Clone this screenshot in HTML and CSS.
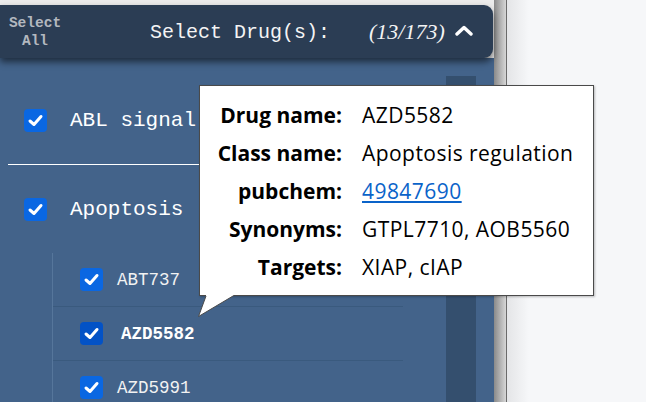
FILE: index.html
```html
<!DOCTYPE html>
<html>
<head>
<meta charset="utf-8">
<link rel="stylesheet" href="styles.css">
</head>
<body>
<div class="page">
  <div class="panel">
    <div class="header">
      <div class="select-all">Select<br>All</div>
      <div class="title">Select Drug(s):</div>
      <div class="count">(13/173)</div>
      <svg class="caret" width="18" height="11" viewBox="0 0 18 11"><path d="M2 9 L9 2.5 L16 9" fill="none" stroke="#fff" stroke-width="3.4" stroke-linecap="round" stroke-linejoin="round"/></svg>
    </div>
    <div class="body">
      <div class="list">
        <div class="group-row">
          <span class="cb"><svg viewBox="0 0 23 23"><path d="M6 12 L10 15.5 L17 7.5" fill="none" stroke="#fff" stroke-width="3" stroke-linecap="round" stroke-linejoin="round"/></svg></span>
          <span class="group-label">ABL signal</span>
        </div>
        <div class="divider"></div>
        <div class="group-row">
          <span class="cb"><svg viewBox="0 0 23 23"><path d="M6 12 L10 15.5 L17 7.5" fill="none" stroke="#fff" stroke-width="3" stroke-linecap="round" stroke-linejoin="round"/></svg></span>
          <span class="group-label">Apoptosis</span>
        </div>
        <div class="sublist">
          <div class="item">
            <span class="cb"><svg viewBox="0 0 23 23"><path d="M6 12 L10 15.5 L17 7.5" fill="none" stroke="#fff" stroke-width="3" stroke-linecap="round" stroke-linejoin="round"/></svg></span>
            <span class="item-label">ABT737</span>
          </div>
          <div class="item hover">
            <span class="cb"><svg viewBox="0 0 23 23"><path d="M6 12 L10 15.5 L17 7.5" fill="none" stroke="#fff" stroke-width="3" stroke-linecap="round" stroke-linejoin="round"/></svg></span>
            <span class="item-label">AZD5582</span>
          </div>
          <div class="item">
            <span class="cb"><svg viewBox="0 0 23 23"><path d="M6 12 L10 15.5 L17 7.5" fill="none" stroke="#fff" stroke-width="3" stroke-linecap="round" stroke-linejoin="round"/></svg></span>
            <span class="item-label">AZD5991</span>
          </div>
        </div>
      </div>
      <div class="scrollbar"></div>
    </div>
  </div>
  <div class="gutter"></div>
  <div class="rest"></div>

  <div class="tooltip">
    <div class="tt-grid">
      <div class="tt-label">Drug name:</div><div class="tt-value">AZD5582</div>
      <div class="tt-label">Class name:</div><div class="tt-value">Apoptosis regulation</div>
      <div class="tt-label">pubchem:</div><div class="tt-value"><a class="tt-link" href="#">49847690</a></div>
      <div class="tt-label">Synonyms:</div><div class="tt-value">GTPL7710, AOB5560</div>
      <div class="tt-label">Targets:</div><div class="tt-value">XIAP, cIAP</div>
    </div>
    <svg class="tt-arrow" width="40" height="26" viewBox="0 0 40 26">
      <polygon points="9,0 37,0 36,3 1.5,23.5 9,3" fill="#fff"/>
      <polyline points="9,3 1.5,23.5 36,3" fill="none" stroke="#4a4a4a" stroke-width="1"/>
    </svg>
  </div>
</div>
</body>
</html>
```

FILE: styles.css
```css
* { box-sizing: border-box; }
html, body { margin: 0; padding: 0; }
body {
  width: 646px;
  height: 402px;
  overflow: hidden;
  background: #f6f7f9;
}
.page {
  position: relative;
  display: flex;
  width: 646px;
  height: 402px;
}
.panel {
  width: 494px;
  height: 402px;
  display: flex;
  flex-direction: column;
  background: #ececec;
  padding-top: 5px;
  flex: none;
}
.header {
  position: relative;
  z-index: 2;
  width: 493px;
  height: 53px;
  flex: none;
  background: #2b3d54;
  border-radius: 0 9px 9px 0;
  box-shadow: 0 4px 7px rgba(0, 0, 0, 0.55);
  display: flex;
  align-items: center;
  color: #fff;
}
.select-all {
  width: 70px;
  text-align: center;
  font-family: "Liberation Mono", monospace;
  font-weight: bold;
  font-size: 14.5px;
  line-height: 18px;
  color: #b3b8bf;
  margin-top: 1px;
}
.title {
  margin-left: 80px;
  font-family: "Liberation Mono", monospace;
  font-size: 20px;
  color: #f4f4f4;
  margin-top: 1px;
}
.count {
  margin-left: 39px;
  font-family: "Liberation Serif", serif;
  font-style: italic;
  font-size: 22px;
  color: #f4f4f4;
}
.caret {
  margin-left: 10px;
  margin-top: -3px;
  display: block;
}
.body {
  flex: 1;
  background: #43638a;
  display: flex;
  overflow: hidden;
}
.list {
  flex: 1;
  padding-top: 18px;
}
.group-row {
  height: 88px;
  display: flex;
  align-items: center;
  padding-left: 24px;
}
.cb {
  width: 23px;
  height: 23px;
  border-radius: 4px;
  background: #0a67e2;
  flex: none;
  display: block;
}
.cb svg { width: 23px; height: 23px; display: block; }
.group-label {
  margin-left: 23px;
  font-family: "Liberation Mono", monospace;
  font-size: 21px;
  color: #fff;
}
.divider {
  height: 1px;
  background: #ffffff;
  margin: 0 6px 0 8px;
}
.sublist {
  margin-left: 52px;
  border-left: 1px solid #56769b;
  width: 351px;
}
.item {
  height: 54px;
  display: flex;
  align-items: center;
  padding-left: 27px;
  border-bottom: 1px solid #3a5a7e;
}
.item-label {
  margin-left: 14px;
  font-family: "Liberation Mono", monospace;
  font-size: 17.5px;
  color: #f2f2f2;
}
.item.hover .cb { background: #0352c6; }
.item.hover .item-label { font-weight: bold; margin-left: 18px; color: #fff; }
.scrollbar {
  width: 30px;
  margin: 18px 18px 0 0;
  background: #344f6e;
  flex: none;
}
.gutter {
  width: 13px;
  flex: none;
  background: linear-gradient(to right, #8a8a8a, #d6d6d6);
  border-right: 1px solid #6a6a6a;
}
.rest {
  flex: 1;
  background: linear-gradient(to right, #e4e5e7, #f6f7f9 22px);
}
.tooltip {
  position: absolute;
  left: 199px;
  top: 85px;
  width: 395px;
  height: 211px;
  background: #fff;
  border: 1px solid #4a4a4a;
  box-shadow: 1px 1px 2px rgba(0, 0, 0, 0.25);
  z-index: 5;
  padding-top: 10px;
  font-family: "Open Sans", sans-serif;
  font-size: 21px;
  color: #000;
}
.tt-grid {
  display: grid;
  grid-template-columns: 142px 1fr;
  column-gap: 20px;
  line-height: 38px;
}
.tt-label {
  text-align: right;
  font-weight: bold;
  white-space: nowrap;
}
.tt-value { white-space: nowrap; letter-spacing: 0.45px; }
.tt-link { color: #0a63c9; text-decoration: underline; }
.tt-arrow {
  position: absolute;
  left: -3px;
  top: calc(100% - 2px);
  overflow: visible;
}
```
